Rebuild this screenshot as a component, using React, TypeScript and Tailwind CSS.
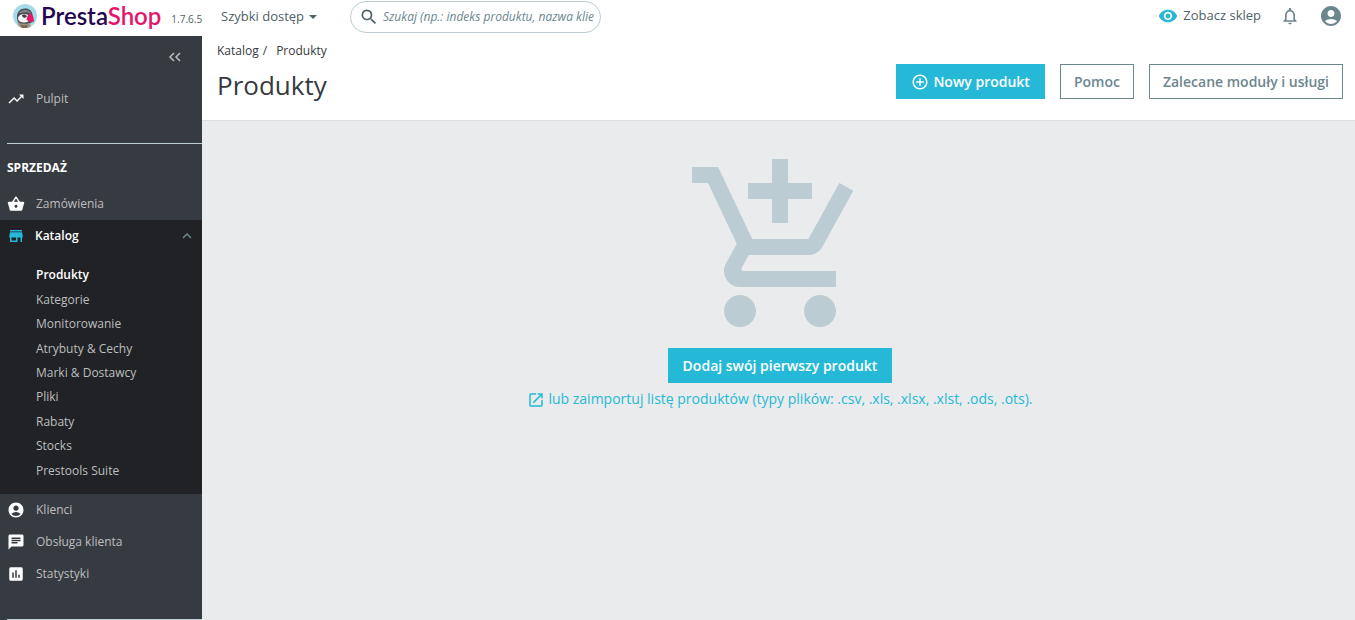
import { useState } from "react";
import type { IconType } from "react-icons";
import {
  MdAccountCircle,
  MdAddCircleOutline,
  MdAddShoppingCart,
  MdAssessment,
  MdChat,
  MdNotificationsNone,
  MdOpenInNew,
  MdSearch,
  MdShoppingBasket,
  MdStore,
  MdTrendingUp,
  MdVisibility,
} from "react-icons/md";

const catalogLinks = [
  "Produkty",
  "Kategorie",
  "Monitorowanie",
  "Atrybuty & Cechy",
  "Marki & Dostawcy",
  "Pliki",
  "Rabaty",
  "Stocks",
  "Prestools Suite",
];

function PuffinLogo() {
  return (
    <svg viewBox="0 0 48 48" className="size-6" aria-hidden="true">
      <clipPath id="badge">
        <circle cx="24" cy="24" r="24" />
      </clipPath>
      <g clipPath="url(#badge)">
        <rect width="48" height="48" fill="#a4dbe8" />
        {/* head */}
        <path d="M8 25c0-10 7-16 16-16s14 5 15 13v14l-8 4H12c-3-4-4-9-4-15z" fill="#4a4c52" />
        <path d="M10 20c4-6 10-9 16-8 5 1 9 4 11 8-5-3-10-4-15-3-5 0-9 1-12 3z" fill="#85888c" />
        {/* cheek */}
        <path d="M10 28c1-5 6-8 12-8 7 0 11 3 12 8 0 6-5 9-12 9s-12-3-12-9z" fill="#f5f6f6" />
        <path d="M18 22c3-2 8-1 10 2-1 3-4 4-7 3-2-1-3-3-3-5z" fill="#3e4047" />
        {/* body */}
        <path d="M9 36c7 4 15 5 24 2l4 10H12z" fill="#a8957f" />
        <path d="M15 41c5 2 10 2 14 0v7H17z" fill="#75675a" />
        {/* beak */}
        <path d="M34 18c5 3 8 9 8 17-5 2-11 1-15-4 1-5 3-10 7-13z" fill="#e5176b" />
      </g>
    </svg>
  );
}

function NavItem({ icon: Icon, label }: { icon: IconType; label: string }) {
  return (
    <a href="#" className="flex h-8 items-center gap-[11px] pl-[7px] text-[#bebebe] hover:text-white">
      <Icon className="size-[18px] text-white" />
      {label}
    </a>
  );
}

function Header() {
  return (
    <header className="flex h-9 items-start justify-between bg-white text-[13px] text-[#4e6167]">
      <div className="flex items-start">
        <div className="flex w-[221px] items-center pt-1 pl-[13px]">
          <PuffinLogo />
          <a href="#" className="ml-1 font-[Lato] text-2xl leading-6 font-semibold text-[#25064f]">
            Presta<span className="text-[#e5176b]">Shop</span>
          </a>
          <span className="ml-2.5 pt-1.5 text-[10px] leading-4">1.7.6.5</span>
        </div>
        <button type="button" className="flex h-[34px] w-[129px] items-center gap-[5px]">
          Szybki dostęp
          <svg viewBox="0 0 8 4" className="h-1 w-2" fill="currentColor" aria-hidden="true">
            <path d="M0 0h8L4 4z" />
          </svg>
        </button>
        <label className="mt-px flex h-8 w-[251px] items-center rounded-full border border-[#bbcdd2] pr-1.5 pl-2">
          <MdSearch className="size-5 text-[#4e6167]" />
          <input
            type="text"
            aria-label="Szukaj"
            placeholder="Szukaj (np.: indeks produktu, nazwa klienta…)"
            className="ml-1 w-[211px] text-xs outline-none placeholder:text-[#6c868e] placeholder:italic"
          />
        </label>
      </div>
      <div className="flex h-8 items-center pr-3">
        <a href="#" className="flex items-center gap-[5px]">
          <MdVisibility className="size-5 text-[#25b9d7]" />
          Zobacz sklep
        </a>
        <button type="button" aria-label="Powiadomienia" className="ml-[19px] text-[#6c868e]">
          <MdNotificationsNone className="size-5" />
        </button>
        <button type="button" aria-label="Konto" className="ml-[19px] text-[#6c868e]">
          <MdAccountCircle className="size-6" />
        </button>
      </div>
    </header>
  );
}

function Sidebar() {
  const [open, setOpen] = useState(true);

  return (
    <nav className="w-[202px] shrink-0 bg-[#363a41] text-xs">
      <div className="flex h-[47px] items-start justify-end pt-4 pr-5">
        <button type="button" aria-label="Zwiń menu" className="text-[#bebebe]">
          <svg viewBox="0 0 14 10" className="h-2.5 w-3.5" fill="none" stroke="currentColor" strokeWidth="1.5" aria-hidden="true">
            <path d="M6 1L2 5l4 4M12 1L8 5l4 4" />
          </svg>
        </button>
      </div>
      <NavItem icon={MdTrendingUp} label="Pulpit" />
      <div className="mt-7 ml-[7px] border-t border-[#bbcdd2]" />
      <h2 className="flex h-11 items-center pt-1 pl-[7px] font-bold text-white">SPRZEDAŻ</h2>
      <NavItem icon={MdShoppingBasket} label="Zamówienia" />
      <div className="bg-[#202226]">
        <button
          type="button"
          aria-expanded={open}
          onClick={() => setOpen(!open)}
          className="flex h-8 w-full items-center gap-2.5 pr-2.5 pl-[7px] font-semibold text-white"
        >
          <MdStore className="size-[18px] text-[#25b9d7]" />
          Katalog
          <svg viewBox="0 0 10 6" className="ml-auto h-1.5 w-2.5 text-[#6c868e]" fill="none" stroke="currentColor" strokeWidth="1.5" aria-hidden="true">
            <path d="M1 5l4-4 4 4" />
          </svg>
        </button>
        {open && (
          <ul className="flex h-[242px] flex-col py-[11px] pl-9">
            {catalogLinks.map((link) => (
              <li key={link} className="flex flex-1 items-center">
                <a
                  href="#"
                  className={link === "Produkty" ? "font-semibold text-white" : "text-[#bebebe] hover:text-white"}
                >
                  {link}
                </a>
              </li>
            ))}
          </ul>
        )}
      </div>
      <NavItem icon={MdAccountCircle} label="Klienci" />
      <NavItem icon={MdChat} label="Obsługa klienta" />
      <NavItem icon={MdAssessment} label="Statystyki" />
      <div className="mt-[29px] ml-[7px] border-t border-[#bbcdd2]" />
    </nav>
  );
}

function PageHead() {
  return (
    <div className="flex h-[85px] items-start justify-between border-b border-[#dfdfdf] bg-white pr-3 pl-[15px]">
      <div>
        <div className="flex gap-1 pt-[7px] text-xs leading-4 text-[#363a41]">
          <a href="#">Katalog</a>
          <span>/</span>
          <a href="#" className="ml-[5px]">
            Produkty
          </a>
        </div>
        <h1 className="mt-2 text-[26px] leading-9 text-[#363a41]">Produkty</h1>
      </div>
      <div className="flex gap-[15px] pt-7 text-sm font-semibold text-[#6c868e]">
        <button type="button" className="flex h-[35px] items-center gap-1 bg-[#25b9d7] px-[15px] text-white">
          <MdAddCircleOutline className="size-[18px]" />
          Nowy produkt
        </button>
        <button type="button" className="h-[35px] border border-[#6c868e] px-[13px]">
          Pomoc
        </button>
        <button type="button" className="h-[35px] border border-[#6c868e] px-[13px]">
          Zalecane moduły i usługi
        </button>
      </div>
    </div>
  );
}

export default function App() {
  return (
    <div className="flex min-h-screen flex-col bg-[#eaebec] font-['Open_Sans',sans-serif]">
      <Header />
      <div className="flex flex-1">
        <Sidebar />
        <main className="min-w-0 flex-1">
          <PageHead />
          <div className="flex flex-col items-center pt-[30px] pl-[3px] text-sm">
            <MdAddShoppingCart className="size-48 text-[#bbcdd2]" />
            <button type="button" className="mt-[5px] h-[35px] bg-[#25b9d7] px-[15px] font-semibold text-white">
              Dodaj swój pierwszy produkt
            </button>
            <a href="#" className="mt-1.5 flex items-center gap-[3px] text-[#25b9d7]">
              <MdOpenInNew className="mt-0.5 size-[18px]" />
              lub zaimportuj listę produktów (typy plików: .csv, .xls, .xlsx, .xlst, .ods, .ots).
            </a>
          </div>
        </main>
      </div>
    </div>
  );
}
